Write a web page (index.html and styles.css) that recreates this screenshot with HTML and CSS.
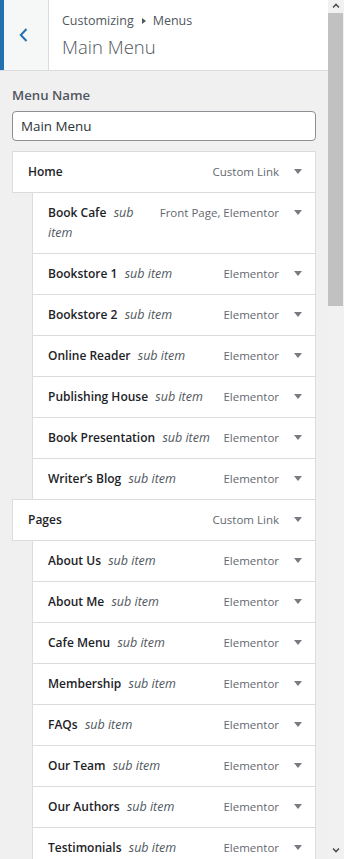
FILE: index.html
```html
<!DOCTYPE html>
<html lang="en">
<head>
    <meta charset="UTF-8">
    <meta name="viewport" content="width=device-width, initial-scale=1.0">
    <link rel="stylesheet" href="styles.css">
    <title>Customizing Menus</title>
</head>
<body>
    <div class="frame">
        <div class="panel">
            <div class="header">
                <button class="back" aria-label="Back">
                    <svg width="9" height="14" viewBox="0 0 9 14"><path d="M7.5 1 L1.8 7 L7.5 13" fill="none" stroke="#2271b1" stroke-width="2"/></svg>
                </button>
                <div class="header-title">
                    <div class="action">Customizing <span class="crumb"></span> Menus</div>
                    <h1>Main Menu</h1>
                </div>
            </div>

            <div class="content">
                <label class="control-title" for="menuName">Menu Name</label>
                <input type="text" id="menuName" class="menu-name" value="Main Menu">

                <ul class="menu-items">
                    <li class="item depth-0"><span class="item-title"><b>Home</b></span><span class="item-type">Custom Link</span><span class="toggle"></span></li>
                    <li class="item depth-1"><span class="item-title"><b>Book Cafe</b> <i>sub item</i></span><span class="item-type">Front Page, Elementor</span><span class="toggle"></span></li>
                    <li class="item depth-1"><span class="item-title"><b>Bookstore 1</b> <i>sub item</i></span><span class="item-type">Elementor</span><span class="toggle"></span></li>
                    <li class="item depth-1"><span class="item-title"><b>Bookstore 2</b> <i>sub item</i></span><span class="item-type">Elementor</span><span class="toggle"></span></li>
                    <li class="item depth-1"><span class="item-title"><b>Online Reader</b> <i>sub item</i></span><span class="item-type">Elementor</span><span class="toggle"></span></li>
                    <li class="item depth-1"><span class="item-title"><b>Publishing House</b> <i>sub item</i></span><span class="item-type">Elementor</span><span class="toggle"></span></li>
                    <li class="item depth-1"><span class="item-title"><b>Book Presentation</b> <i>sub item</i></span><span class="item-type">Elementor</span><span class="toggle"></span></li>
                    <li class="item depth-1"><span class="item-title"><b>Writer’s Blog</b> <i>sub item</i></span><span class="item-type">Elementor</span><span class="toggle"></span></li>
                    <li class="item depth-0"><span class="item-title"><b>Pages</b></span><span class="item-type">Custom Link</span><span class="toggle"></span></li>
                    <li class="item depth-1"><span class="item-title"><b>About Us</b> <i>sub item</i></span><span class="item-type">Elementor</span><span class="toggle"></span></li>
                    <li class="item depth-1"><span class="item-title"><b>About Me</b> <i>sub item</i></span><span class="item-type">Elementor</span><span class="toggle"></span></li>
                    <li class="item depth-1"><span class="item-title"><b>Cafe Menu</b> <i>sub item</i></span><span class="item-type">Elementor</span><span class="toggle"></span></li>
                    <li class="item depth-1"><span class="item-title"><b>Membership</b> <i>sub item</i></span><span class="item-type">Elementor</span><span class="toggle"></span></li>
                    <li class="item depth-1"><span class="item-title"><b>FAQs</b> <i>sub item</i></span><span class="item-type">Elementor</span><span class="toggle"></span></li>
                    <li class="item depth-1"><span class="item-title"><b>Our Team</b> <i>sub item</i></span><span class="item-type">Elementor</span><span class="toggle"></span></li>
                    <li class="item depth-1"><span class="item-title"><b>Our Authors</b> <i>sub item</i></span><span class="item-type">Elementor</span><span class="toggle"></span></li>
                    <li class="item depth-1"><span class="item-title"><b>Testimonials</b> <i>sub item</i></span><span class="item-type">Elementor</span><span class="toggle"></span></li>
                </ul>
            </div>
        </div>

        <div class="scrollbar">
            <svg class="arrow" width="16" height="12" viewBox="0 0 16 12"><path d="M5 7 L8 4 L11 7" fill="none" stroke="#505050" stroke-width="1.6"/></svg>
            <div class="thumb"></div>
            <svg class="arrow arrow-down" width="16" height="12" viewBox="0 0 16 12"><path d="M5 4 L8 7 L11 4" fill="none" stroke="#505050" stroke-width="1.6"/></svg>
        </div>
    </div>
</body>
</html>
```

FILE: styles.css
```css
html, body {
    margin: 0;
    padding: 0;
    height: 859px;
    overflow: hidden;
}

body {
    font-family: "Open Sans", "Noto Sans", sans-serif;
    font-size: 12.5px;
    color: #1d2327;
    background-color: #f0f0f1;
}

.frame {
    display: flex;
    height: 859px;
}

.panel {
    width: 328px;
    flex: none;
    background-color: #f0f0f1;
    overflow: hidden;
}

/* header */
.header {
    display: flex;
    height: 70px;
    background-color: #fff;
    border-bottom: 1px solid #dcdcde;
}

.back {
    width: 49px;
    flex: none;
    display: flex;
    align-items: center;
    padding: 0 0 0 15px;
    margin: 0;
    background-color: #f6f7f7;
    border: none;
    border-left: 4px solid #2271b1;
    border-right: 1px solid #dcdcde;
}

.header-title {
    padding: 12px 0 0 13px;
    color: #50575e;
}

.action {
    font-size: 12.5px;
    line-height: 18px;
    display: flex;
    align-items: center;
}

.crumb {
    display: inline-block;
    width: 0;
    height: 0;
    border-left: 4px solid #50575e;
    border-top: 3px solid transparent;
    border-bottom: 3px solid transparent;
    margin: 0 7px 0 8px;
}

h1 {
    margin: 4px 0 0;
    font-size: 18.5px;
    font-weight: 300;
    line-height: 26px;
    color: #50575e;
}

/* menu name */
.content {
    padding: 12px 12px 0;
}

.control-title {
    display: block;
    font-size: 13.2px;
    font-weight: 600;
    line-height: 24px;
    color: #50575e;
    margin-bottom: 4px;
}

.menu-name {
    display: block;
    box-sizing: border-box;
    width: 304px;
    height: 30px;
    margin: 0;
    padding: 0 8px;
    font-family: inherit;
    font-size: 13.4px;
    color: #2c3338;
    background-color: #fff;
    border: 1px solid #8c8f94;
    border-radius: 4px;
    outline: none;
}

/* items */
.menu-items {
    list-style: none;
    margin: 10px 0 0;
    padding: 0;
}

.item {
    display: flex;
    align-items: flex-start;
    background-color: #fff;
    border: 1px solid #dcdcde;
    margin-top: -1px;
    padding: 10px 8px 10px 15px;
    line-height: 20px;
}

.item:first-child {
    margin-top: 0;
}

.depth-1 {
    margin-left: 20px;
}

.item-title {
    flex: 1;
    min-width: 0;
    padding-right: 8px;
}

.item-title b {
    font-size: 12px;
    font-weight: 600;
    color: #1d2327;
    margin-right: 4px;
}

.item-title i {
    font-size: 12.5px;
    color: #50575e;
}

.item-type {
    flex: none;
    font-size: 11.5px;
    color: #646970;
    margin-right: 10px;
}

.toggle {
    flex: none;
    width: 18px;
    height: 20px;
    display: flex;
    justify-content: center;
    align-items: center;
}

.toggle::before {
    content: "";
    width: 0;
    height: 0;
    border-top: 5px solid #787c82;
    border-left: 4px solid transparent;
    border-right: 4px solid transparent;
    margin-top: -1px;
}

/* fake scrollbar */
.scrollbar {
    width: 16px;
    flex: none;
    display: flex;
    flex-direction: column;
    background-color: #f1f1f1;
}

.arrow {
    display: block;
    flex: none;
    height: 13px;
}

.thumb {
    width: 15px;
    height: 293px;
    background-color: #c1c1c1;
}

.arrow-down {
    margin-top: auto;
    margin-bottom: 2px;
}
```
